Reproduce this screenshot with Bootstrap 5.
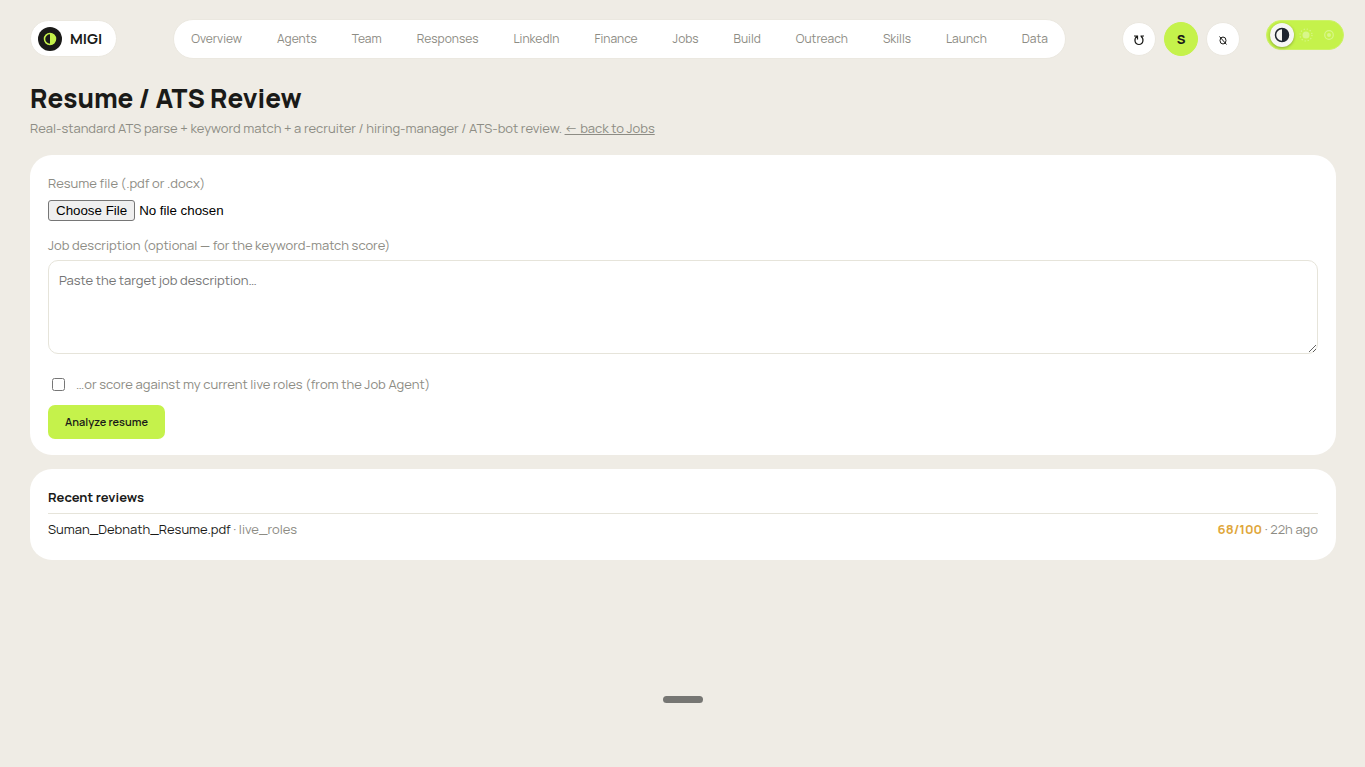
<!DOCTYPE html>
<html lang="en">
<head>
<meta charset="utf-8">
<meta name="viewport" content="width=device-width, initial-scale=1">
<title>Resume / ATS Review</title>
<link href="https://cdn.jsdelivr.net/npm/bootstrap@5.3.0/dist/css/bootstrap.min.css" rel="stylesheet">
<style>
:root { --ink: #1a1a18; --muted: #8d8c84; --line: #e6e4da; --lime: #c5f24b; }
body { background: #efece5; color: var(--ink); font: 13px/20px Manrope, Inter, "Liberation Sans", sans-serif; min-height: 100vh; }
.topbar { padding: 19px 21px 0 30px; }
.pill { background: #fff; border: 1px solid #ebe8e0; }
.brand { height: 37px; padding: 0 14px 0 7px; font-size: 15px; font-weight: 700; color: var(--ink); margin-top: 1px; }
.menu { height: 40px; padding: 0 17px; margin: 0 56px; }
.menu a { color: var(--muted); font-size: 12px; }
.round { width: 34px; height: 34px; padding: 0; border: 1px solid #ebe8e0; background: #fff; color: var(--ink); font-size: 13px; line-height: 20px; }
.round-lime { background: var(--lime); border-color: var(--lime); font-weight: 800; }
.actions { margin: 3px 26px 0 0; gap: 8px; }
.themes { width: 78px; height: 30px; padding: 2px 3px; background: var(--lime); border: 1px solid #cdf268; margin-top: 1px; }
.themes button { border: 0; padding: 0; background: none; line-height: 0; width: 23px; flex: none; }
.themes .current { width: 24px; height: 24px; border-radius: 50%; background: #f6f6f4; box-shadow: 0 1px 3px rgba(0,0,0,.3); }
.page { padding: 22px 29px 14px 30px; }
h1 { font-size: 26px; line-height: 34px; font-weight: 800; margin: 0 0 3px; }
.intro { margin-bottom: 17px; }
.soft { color: var(--muted); }
.soft a { color: inherit; }
.panel { background: #fff; border-radius: 22px; padding: 18px 18px 16px; }
.filebox { font: revert; color: #000; height: 21px; margin: 7px 0 14px; }
.filebox::file-selector-button { font: inherit; padding: 1px 7px; background: #efefef; border: 1px solid #767676; border-radius: 3px; color: #000; height: 21px; margin-right: 4px; }
.jobtext { height: 94px; padding: 10px; margin-top: 5px; border: 1px solid var(--line); border-radius: 10px; line-height: 18px; resize: vertical; outline-color: var(--lime); }
.jobtext::placeholder { color: #757575; }
.choice { margin: 20px 0 11px; }
.tick { width: 13px; height: 13px; margin: 0 11px 0 4px; }
.analyze { height: 34px; padding: 0 17px; border: 0; border-radius: 7px; background: var(--lime); font-size: 11px; font-weight: 600; color: var(--ink); }
.recent { margin-top: 14px; }
h2 { font-size: 13px; line-height: 20px; font-weight: 700; margin: 0; padding-bottom: 6px; border-bottom: 1px solid var(--line); }
.review { padding: 5px 0; }
.score { color: #dfa73b; font-weight: 700; }
.grip { width: 40px; height: 7px; border-radius: 4px; background: #767673; bottom: 64px; }
</style>
</head>
<body>
<header class="topbar d-flex align-items-start">
  <a href="#" class="pill brand rounded-pill d-flex align-items-center gap-2 text-decoration-none">
    <svg width="24" height="24" viewBox="0 0 24 24" aria-hidden="true"><circle cx="12" cy="12" r="12" fill="#1a1a18"/><circle cx="12" cy="12" r="5.5" fill="none" stroke="#c5f24b" stroke-width="1.5"/><path d="M12 6.5a5.500 5.500 0 0 1 0 11z" fill="#c5f24b"/></svg>
    MIGI
  </a>
  <nav class="pill menu rounded-pill flex-grow-1 d-flex align-items-center justify-content-between" aria-label="Main">
    <a class="text-decoration-none" href="#">Overview</a><a class="text-decoration-none" href="#">Agents</a><a class="text-decoration-none" href="#">Team</a><a class="text-decoration-none" href="#">Responses</a><a class="text-decoration-none" href="#">LinkedIn</a><a class="text-decoration-none" href="#">Finance</a><a class="text-decoration-none" href="#">Jobs</a><a class="text-decoration-none" href="#">Build</a><a class="text-decoration-none" href="#">Outreach</a><a class="text-decoration-none" href="#">Skills</a><a class="text-decoration-none" href="#">Launch</a><a class="text-decoration-none" href="#">Data</a>
  </nav>
  <div class="actions d-flex">
    <button type="button" class="round rounded-circle" aria-label="Refresh"><svg width="12" height="12" viewBox="0 0 12 12" fill="none" stroke="#1a1a18" stroke-width="1.200"><path d="M1 2h3.500v3.500M4.200 2.200C.5 4.500 1.500 10.500 6 10.500S11.200 4.500 8 2.200M7.500 2H11"/></svg></button>
    <button type="button" class="round round-lime rounded-circle">S</button>
    <button type="button" class="round rounded-circle" aria-label="Sign out"><svg width="10" height="10" viewBox="0 0 10 10" fill="none" stroke="#1a1a18"><ellipse cx="5" cy="5.500" rx="3" ry="3.500"/><path d="M1.500 1.500l7 8"/></svg></button>
  </div>
  <div class="themes rounded-pill d-flex align-items-center" role="group" aria-label="Theme">
    <button type="button" class="current" aria-label="Contrast"><svg width="16" height="16" viewBox="0 0 16 16"><circle cx="8" cy="8" r="6.500" fill="none" stroke="#1e2530" stroke-width="1.500"/><path d="M8 1.500a6.500 6.500 0 0 1 0 13z" fill="#1e2530"/></svg></button>
    <button type="button" aria-label="Light"><svg width="14" height="14" viewBox="0 0 14 14"><circle cx="7" cy="7" r="3.500" fill="#d8f68a"/><circle cx="7" cy="7" r="6" fill="none" stroke="#d8f68a" stroke-width="1.200" stroke-dasharray="1.200 1.942"/></svg></button>
    <button type="button" aria-label="Focus"><svg width="12" height="12" viewBox="0 0 12 12"><circle cx="6" cy="6" r="2" fill="#d8f68a"/><circle cx="6" cy="6" r="4.300" fill="none" stroke="#d8f68a" stroke-width="1.200"/></svg></button>
  </div>
</header>
<main class="page">
  <h1>Resume / ATS Review</h1>
  <p class="soft intro">Real-standard ATS parse + keyword match + a recruiter / hiring-manager / ATS-bot review. <a href="#">← back to Jobs</a></p>
  <form class="panel">
    <label class="soft d-block" for="resume">Resume file (.pdf or .docx)</label>
    <input class="filebox d-block" type="file" id="resume" accept=".pdf,.docx">
    <label class="soft d-block" for="job">Job description (optional — for the keyword-match score)</label>
    <textarea class="jobtext w-100 d-block" id="job" placeholder="Paste the target job description…"></textarea>
    <div class="choice d-flex align-items-center">
      <input class="tick" type="checkbox" id="live"><label class="soft" for="live">…or score against my current live roles (from the Job Agent)</label>
    </div>
    <button type="button" class="analyze d-block">Analyze resume</button>
  </form>
  <section class="panel recent">
    <h2>Recent reviews</h2>
    <div class="review d-flex justify-content-between">
      <span>Suman_Debnath_Resume.pdf <span class="soft">· live_roles</span></span>
      <span class="soft"><span class="score">68/100</span> · 22h ago</span>
    </div>
  </section>
</main>
<div class="grip position-fixed start-50 translate-middle-x" aria-hidden="true"></div>
<script src="https://cdn.jsdelivr.net/npm/bootstrap@5.3.0/dist/js/bootstrap.bundle.min.js"></script>
</body>
</html>
